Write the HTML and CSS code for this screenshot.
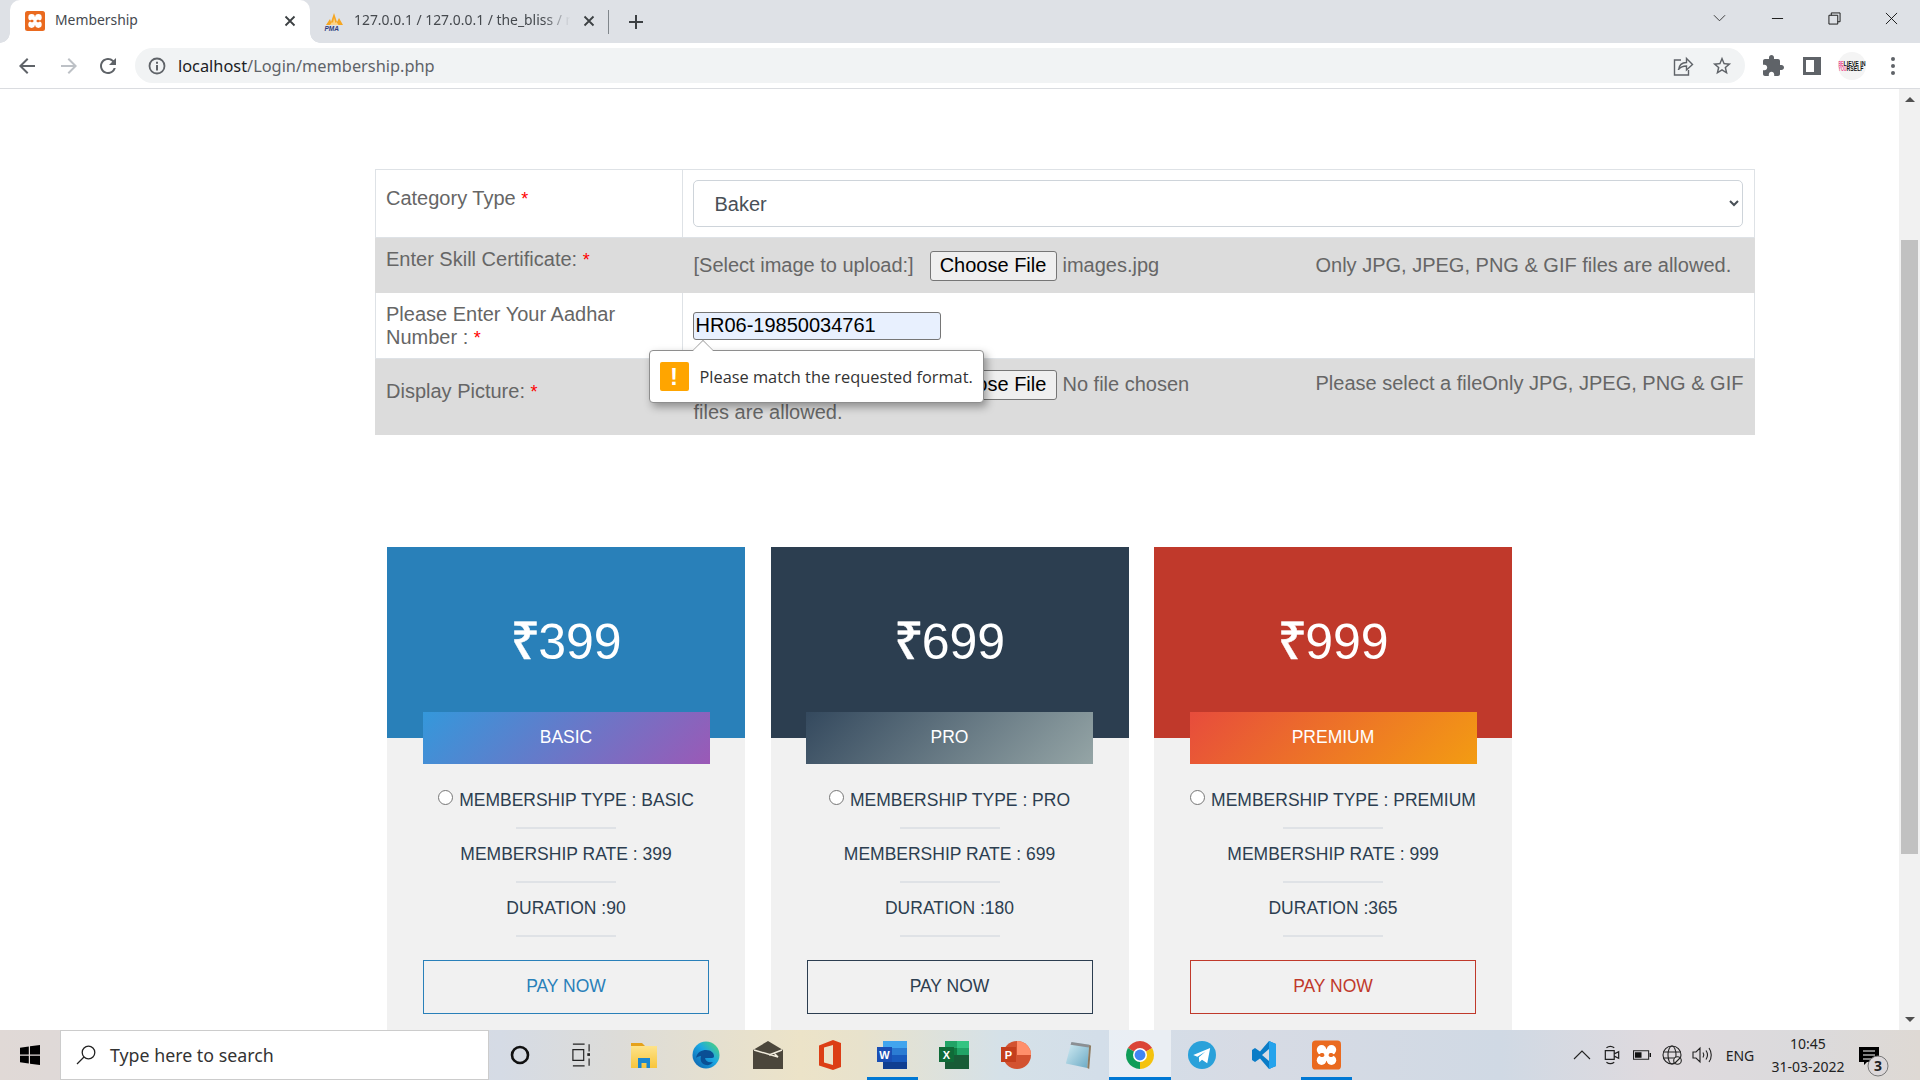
FILE: index.html
```html
<!DOCTYPE html>
<html lang="en">
<head>
<meta charset="utf-8">
<title>Membership</title>
<link rel="stylesheet" href="styles.css">
</head>
<body>
<svg class="defs" width="0" height="0" aria-hidden="true">
  <defs>
    <symbol id="xampp" viewBox="0 0 20 20">
      <rect x="0" y="0" width="20" height="20" rx="2.5" fill="#ea6a1f"/>
      <circle cx="6.600" cy="6.400" r="3.300" fill="#fff"/><circle cx="13.400" cy="6.400" r="3.300" fill="#fff"/>
      <circle cx="6.600" cy="13.600" r="3.300" fill="#fff"/><circle cx="13.400" cy="13.600" r="3.300" fill="#fff"/>
      <rect x="6" y="6" width="8" height="8" fill="#fff"/>
      <rect x="5.300" y="8.700" width="3.200" height="2.600" rx="1.200" fill="#ea6a1f"/><rect x="11.500" y="8.700" width="3.200" height="2.600" rx="1.200" fill="#ea6a1f"/>
    </symbol>
    <linearGradient id="edgeG" x1="0" y1="1" x2="1" y2="0"><stop offset="0" stop-color="#0b5aa8"/><stop offset=".55" stop-color="#1ba7e3"/><stop offset="1" stop-color="#58dc6a"/></linearGradient>
    <linearGradient id="padG" x1="0" y1="0" x2="1" y2="1"><stop offset="0" stop-color="#d5eef5"/><stop offset="1" stop-color="#6aa9c4"/></linearGradient>
    <linearGradient id="folderG" x1="0" y1="0" x2="0" y2="1"><stop offset="0" stop-color="#fde38a"/><stop offset="1" stop-color="#f8c53c"/></linearGradient>
  </defs>
</svg>
<div class="window">
  <header class="tabstrip">
    <div class="tab tab-active">
      <svg class="favicon"><use href="#xampp"/></svg>
      <span class="tab-title">Membership</span>
      <svg class="tab-close" viewBox="0 0 12 12"><path d="M1.5 1.5l9 9M10.5 1.5l-9 9"/></svg>
    </div>
    <div class="tab tab-bg">
      <svg class="favicon" viewBox="0 0 21 21">
        <path d="M2 14L6 8l1 3 3-9 3 9 2-4 4 7z" fill="#f5a623"/>
        <path d="M6 14l2-3 1 1 1-5 1.500 5 1-1 2 3z" fill="#fbd38a"/>
        <text x="0.500" y="20" class="pma">PMA</text>
      </svg>
      <span class="tab-title tab-title-fade">127.0.0.1 / 127.0.0.1 / the_bliss / membership</span>
      <svg class="tab-close" viewBox="0 0 12 12"><path d="M1.5 1.5l9 9M10.5 1.5l-9 9"/></svg>
    </div>
    <span class="tab-sep"></span>
    <svg class="new-tab" viewBox="0 0 16 16"><path d="M8 1v14M1 8h14"/></svg>
    <div class="win-controls">
      <svg class="win-chevron" viewBox="0 0 14 8"><path d="M1 1l6 6 6-6"/></svg>
      <span class="win-btn"><svg viewBox="0 0 14 14"><path d="M1 7h12"/></svg></span>
      <span class="win-btn"><svg viewBox="0 0 14 14"><path d="M1 3.500h9.500V13H1zM3.500 3.500V1H13v9.500h-2.500"/></svg></span>
      <span class="win-btn win-btn-close"><svg viewBox="0 0 14 14"><path d="M1 1l12 12M13 1L1 13"/></svg></span>
    </div>
  </header>

  <nav class="toolbar">
    <span class="tool tool-back"><svg viewBox="0 0 24 24"><path d="M20 11H7.830l5.590-5.590L12 4l-8 8 8 8 1.410-1.410L7.830 13H20v-2z"/></svg></span>
    <span class="tool tool-fwd"><svg viewBox="0 0 24 24"><path d="M4 11h12.170l-5.590-5.590L12 4l8 8-8 8-1.410-1.410L16.170 13H4v-2z"/></svg></span>
    <span class="tool tool-reload"><svg viewBox="0 0 24 24"><path d="M17.650 6.350A7.958 7.958 0 0 0 12 4c-4.420 0-7.990 3.580-7.990 8s3.570 8 7.990 8c3.730 0 6.840-2.550 7.730-6h-2.080A5.990 5.990 0 0 1 12 18c-3.310 0-6-2.690-6-6s2.690-6 6-6c1.660 0 3.140.69 4.220 1.780L13 11h7V4l-2.350 2.350z"/></svg></span>
    <div class="omnibox">
      <svg class="omni-info" viewBox="0 0 20 20"><circle cx="10" cy="10" r="7.500" fill="none" stroke="#5f6368" stroke-width="1.800"/><path d="M9 9h2v5.500H9zM9 5.700h2v2H9z" fill="#5f6368"/></svg>
      <span class="url"><span class="url-host">localhost</span>/Login/membership.php</span>
      <span class="omni-actions">
        <svg class="omni-share" viewBox="0 0 22 22"><path d="M9 5H2.500v15h14v-5M6.500 15c.5-4.500 3.500-7.500 8-7.500V3.500l6 6-6 5.500v-4c-3.500 0-6 1-8 3.500z" fill="none" stroke="#5f6368" stroke-width="1.400"/></svg>
        <svg class="omni-star" viewBox="0 0 24 24"><path d="M22 9.240l-7.190-.62L12 2 9.190 8.630 2 9.240l5.460 4.730L5.820 21 12 17.270 18.180 21l-1.630-7.030L22 9.240zM12 15.400l-3.760 2.270 1-4.280-3.320-2.880 4.380-.38L12 6.100l1.710 4.040 4.380.38-3.320 2.880 1 4.280L12 15.400z"/></svg>
      </span>
    </div>
    <div class="tool-right">
      <span class="tool"><svg viewBox="0 0 24 24"><path d="M20.500 11H19V7c0-1.100-.9-2-2-2h-4V3.500C13 2.120 11.880 1 10.500 1S8 2.120 8 3.500V5H4c-1.100 0-1.990.9-1.990 2v3.800H3.500c1.490 0 2.700 1.210 2.700 2.700s-1.210 2.700-2.700 2.700H2V20c0 1.100.9 2 2 2h3.800v-1.500c0-1.490 1.210-2.700 2.700-2.700 1.490 0 2.700 1.210 2.700 2.700V22H17c1.100 0 2-.9 2-2v-4h1.500c1.380 0 2.500-1.120 2.500-2.500S21.880 11 20.500 11z"/></svg></span>
      <span class="tool"><svg class="side-icon" viewBox="0 0 18 18"><path d="M0 0h18v18H0z" fill="#5f6368"/><path d="M3 3h8v12H3z" fill="#fff"/></svg></span>
      <span class="tool tool-avatar">
        <svg class="avatar" viewBox="0 0 28 28">
          <circle cx="14" cy="14" r="14" fill="#f4f4f4"/>
          <text x="0.500" y="13.500" class="av av-pink" textLength="5" lengthAdjust="spacingAndGlyphs">BE</text><text x="5.500" y="13.500" class="av" textLength="22" lengthAdjust="spacingAndGlyphs">LIEVE IN</text>
          <text x="0.500" y="19" class="av av-pink" textLength="8" lengthAdjust="spacingAndGlyphs">YOU</text><text x="8.500" y="19" class="av" textLength="17" lengthAdjust="spacingAndGlyphs">RSELF</text>
        </svg>
      </span>
      <span class="tool"><svg class="menu-icon" viewBox="0 0 6 18"><circle cx="3" cy="2" r="2"/><circle cx="3" cy="9" r="2"/><circle cx="3" cy="16" r="2"/></svg></span>
    </div>
  </nav>

  <div class="viewport">
    <main class="page">
      <table class="form-table">
        <tr class="row row-category">
          <td class="cell-label"><label class="lbl">Category Type <span class="req">*</span></label></td>
          <td class="cell-field">
            <select class="select"><option>Baker</option></select>
          </td>
        </tr>
        <tr class="row row-shaded row-skill">
          <td class="cell-label"><label class="lbl">Enter Skill Certificate: <span class="req">*</span></label></td>
          <td class="cell-field">
            <span class="upload-note">[Select image to upload:]</span><span class="file-field"><button class="file-btn" type="button">Choose File</button><span class="file-name">images.jpg</span></span><span class="file-help">Only JPG, JPEG, PNG &amp; GIF files are allowed.</span>
          </td>
        </tr>
        <tr class="row row-aadhar">
          <td class="cell-label"><span class="lbl-plain">Please Enter Your Aadhar Number : <span class="req">*</span></span></td>
          <td class="cell-field">
            <span class="input-wrap">
              <input class="text-input" type="text" value="HR06-19850034761">
              <span class="bubble">
                <span class="bubble-arrow"></span>
                <span class="bubble-icon">!</span>
                <span class="bubble-text">Please match the requested format.</span>
              </span>
            </span>
          </td>
        </tr>
        <tr class="row row-shaded row-picture">
          <td class="cell-label"><label class="lbl">Display Picture: <span class="req">*</span></label></td>
          <td class="cell-field">
            <span class="upload-note">[Select image to upload:]</span><span class="file-field"><button class="file-btn" type="button">Choose File</button><span class="file-name">No file chosen</span></span><span class="file-help">Please select a fileOnly JPG, JPEG, PNG &amp; GIF files are allowed.</span>
          </td>
        </tr>
      </table>

      <section class="plans">
        <article class="plan plan-basic">
          <div class="plan-head"><span class="price"><span class="rupee">₹</span>399</span></div>
          <div class="plan-badge">BASIC</div>
          <ul class="plan-list">
            <li><input class="radio" type="radio" name="plan">MEMBERSHIP TYPE : BASIC</li>
            <li>MEMBERSHIP RATE : 399</li>
            <li>DURATION :90</li>
          </ul>
          <a class="pay">PAY NOW</a>
        </article>
        <article class="plan plan-pro">
          <div class="plan-head"><span class="price"><span class="rupee">₹</span>699</span></div>
          <div class="plan-badge">PRO</div>
          <ul class="plan-list">
            <li><input class="radio" type="radio" name="plan">MEMBERSHIP TYPE : PRO</li>
            <li>MEMBERSHIP RATE : 699</li>
            <li>DURATION :180</li>
          </ul>
          <a class="pay">PAY NOW</a>
        </article>
        <article class="plan plan-premium">
          <div class="plan-head"><span class="price"><span class="rupee">₹</span>999</span></div>
          <div class="plan-badge">PREMIUM</div>
          <ul class="plan-list">
            <li><input class="radio" type="radio" name="plan">MEMBERSHIP TYPE : PREMIUM</li>
            <li>MEMBERSHIP RATE : 999</li>
            <li>DURATION :365</li>
          </ul>
          <a class="pay">PAY NOW</a>
        </article>
      </section>
    </main>
    <aside class="scrollbar">
      <span class="sb-btn"><span class="sb-up"></span></span>
      <div class="sb-track"><span class="sb-thumb"></span></div>
      <span class="sb-btn"><span class="sb-down"></span></span>
    </aside>
  </div>

  <footer class="taskbar">
    <span class="start"><svg viewBox="0 0 20 20"><path d="M0 2.800L8.800 1.500V9.500H0zM10 1.300L20 0V9.500H10zM0 10.700H8.800V18.600L0 17.300zM10 10.700H20V20L10 18.700z"/></svg></span>
    <div class="search">
      <svg class="search-icon" viewBox="0 0 20 20"><circle cx="12.500" cy="7.500" r="6.300"/><path d="M8 12L1 19"/></svg>
      <span class="search-text">Type here to search</span>
    </div>
    <div class="apps">
      <span class="app"><svg class="ic" viewBox="0 0 20 20"><circle cx="10" cy="10" r="8" fill="none" stroke="#111" stroke-width="2.600"/></svg></span>
      <span class="app"><svg class="ic ic-view" viewBox="0 0 20 26"><path d="M1 1h13M1 25h13M1 7h12v12H1zM19 1v8M19 17v8" fill="none" stroke="#222" stroke-width="1.300"/><rect x="17" y="11" width="3" height="3" fill="#222"/></svg></span>
      <span class="app"><svg class="ic ic-folder" viewBox="0 0 28 28"><path d="M1 2h11l3 3H1z" fill="#e5a11b"/><path d="M1 5h26v22H1z" fill="url(#folderG)"/><path d="M8 27V17h12v10h-3.500v-5h-5v5z" fill="#1b87cf"/></svg></span>
      <span class="app"><svg class="ic ic-edge" viewBox="0 0 28 28"><circle cx="14" cy="14" r="13.500" fill="url(#edgeG)"/><path d="M4 17c1-6 6-8 10-8 5 0 8 3 8 6 0 1-.5 2-2 2h-7c.5 3 3 5 8 4-2.500 3-5 3.500-7 3-5-1-6-5-5-9-2 0-4 1-5 2z" fill="#0a4f95"/></svg></span>
      <span class="app"><svg class="ic ic-mail" viewBox="0 0 30 28"><path d="M0 9L15 0l15 9v19H0z" fill="#4b463b"/><path d="M1 9l24 7-4-4 8-3-13 5" fill="none" stroke="#f1ecdd" stroke-width="1.400"/></svg></span>
      <span class="app"><svg class="ic ic-office" viewBox="0 0 24 30"><path fill-rule="evenodd" d="M1 5.500L15 0l8 3v24l-8 3-14-4.500zM6 7.500v15l9 2.500V5z" fill="#dc3e15"/></svg></span>
      <span class="app app-open">
        <svg class="ic ic-doc" viewBox="0 0 30 28">
          <rect x="6" y="0" width="24" height="7" fill="#41a5ee"/><rect x="6" y="7" width="24" height="7" fill="#2b7cd3"/><rect x="6" y="14" width="24" height="7" fill="#185abd"/><rect x="6" y="21" width="24" height="7" fill="#103f91"/>
          <rect x="0" y="6" width="15" height="15" fill="#1a4fb4"/><text x="7.500" y="18" class="doc-letter">W</text>
        </svg>
      </span>
      <span class="app">
        <svg class="ic ic-doc" viewBox="0 0 30 28">
          <rect x="6" y="0" width="12" height="7" fill="#21a366"/><rect x="18" y="0" width="12" height="7" fill="#33c481"/><rect x="6" y="7" width="12" height="7" fill="#107c41"/><rect x="18" y="7" width="12" height="7" fill="#21a366"/><rect x="6" y="14" width="24" height="14" fill="#185c37"/>
          <rect x="0" y="6" width="15" height="15" fill="#0f6b38"/><text x="7.500" y="18" class="doc-letter">X</text>
        </svg>
      </span>
      <span class="app">
        <svg class="ic ic-doc" viewBox="0 0 30 28">
          <circle cx="16" cy="14" r="14" fill="#d35230"/><path d="M16 0a14 14 0 0 1 14 14H16z" fill="#ff8f6b"/>
          <rect x="0" y="6" width="15" height="15" fill="#c43e1c"/><text x="7.500" y="18" class="doc-letter">P</text>
        </svg>
      </span>
      <span class="app"><svg class="ic ic-pad" viewBox="0 0 28 30"><path d="M7 1l19 3-2 25L1 24z" fill="url(#padG)"/><path d="M7 1l19 3-.4 3L6 4z" fill="#8b8f93"/><path d="M26 4l2 1-2 25-2-1z" fill="#8d7a5f"/></svg></span>
      <span class="app app-active">
        <svg class="ic ic-round" viewBox="2 2 20 20">
          <path d="M12 12L3.340 7A10 10 0 0 1 20.660 7z" fill="#db4437"/>
          <path d="M12 12L20.660 7A10 10 0 0 1 12 22z" fill="#f4c20d"/>
          <path d="M12 12L12 22A10 10 0 0 1 3.340 7z" fill="#0f9d58"/>
          <circle cx="12" cy="12" r="5" fill="#fff"/><circle cx="12" cy="12" r="3.900" fill="#4285f4"/>
        </svg>
      </span>
      <span class="app"><svg class="ic ic-round" viewBox="0 0 24 24"><circle cx="12" cy="12" r="12" fill="#2aa1da"/><path d="M4.500 12L19 6l-2.500 13-4.500-3-2.300 2.300L9.300 14 15 9l-7 4.500z" fill="#fff"/></svg></span>
      <span class="app"><svg class="ic ic-round" viewBox="0 0 24 28"><path d="M17 0L8 10.500 3 7l-3 2v10l3 2 5-3.500L17 28l7-3V3zM17 8v12l-7-6z" fill="#0a7cc7" fill-rule="evenodd"/><path d="M17 0l7 3v22l-7 3z" fill="#25a3ec"/></svg></span>
      <span class="app app-open"><svg class="ic ic-xampp"><use href="#xampp"/></svg></span>
    </div>
    <div class="tray">
      <span class="tray-ic"><svg viewBox="0 0 18 10"><path d="M1 9l8-8 8 8"/></svg></span>
      <span class="tray-ic"><svg viewBox="0 0 16 18"><path d="M2 5h8v8H2zM10 8l4-2v6l-4-2M3 2.500c2-1.500 5-1.500 7 0M3 15.500c2 1.500 5 1.500 7 0"/></svg></span>
      <span class="tray-ic"><svg viewBox="0 0 19 10"><path d="M.5.5h16v9H.5z"/><path class="solid" d="M2 2h7v6H2zM17.500 3H19v4h-1.500z"/></svg></span>
      <span class="tray-ic tray-wide"><svg viewBox="0 0 20 20"><circle cx="10" cy="10" r="9"/><ellipse cx="10" cy="10" rx="4" ry="9"/><path d="M1 7h18M1 13h18"/><circle class="white" cx="15.500" cy="15.500" r="3.800"/><path d="M13 18l5-5"/></svg></span>
      <span class="tray-ic tray-wide"><svg viewBox="0 0 20 18"><path d="M1 6h3l4-4v14l-4-4H1zM11 6.500c1 1.500 1 3.500 0 5M14 4.500c2 3 2 6 0 9M17 2c3 4 3 10 0 14"/></svg></span>
      <span class="lang">ENG</span>
      <span class="clock"><span>10:45</span><span>31-03-2022</span></span>
      <span class="notif">
        <svg class="notif-icon" viewBox="0 0 32 31"><path d="M0 0h20v15H8l-3 3v-3H0z" fill="#000"/><path d="M4 4h12M4 8h12M4 12h8" stroke="#fff" stroke-width="1.200"/><circle cx="19" cy="19" r="10" fill="#dcd8da" stroke="#777" stroke-width="1"/><text x="19" y="24" class="notif-num">3</text></svg>
      </span>
    </div>
  </footer>
</div>
</body>
</html>
```

FILE: styles.css
```css
* { box-sizing: border-box; }
html, body { margin: 0; height: 100%; overflow: hidden; }
body { font-family: "Liberation Sans", Arial, sans-serif; background: #fff; color: #666; }
.defs { display: block; height: 0; width: 0; }
.window { display: flex; flex-direction: column; height: 100vh; }

/* tab strip */
.tabstrip { display: flex; align-items: center; height: 43px; flex: none; background: #dee1e6; padding-left: 10px; }
.tab { display: flex; align-items: center; height: 43px; padding-bottom: 1px; font-family: "Noto Sans", sans-serif; font-size: 14px; }
.tab-active { width: 300px; background: #fff; border-radius: 10px 10px 0 0; padding: 0 14px 1px 15px; position: relative; }
.tab-active::before, .tab-active::after { content: ""; position: absolute; bottom: 0; width: 10px; height: 10px; }
.tab-active::before { left: -10px; background: radial-gradient(circle at 0 0, #dee1e6 9.500px, #fff 10px); }
.tab-active::after { right: -10px; background: radial-gradient(circle at 100% 0, #dee1e6 9.500px, #fff 10px); }
.tab-bg { width: 298px; padding: 0 13px 1px 14px; }
.favicon { width: 20px; height: 20px; flex: none; }
.tab-bg .favicon { width: 21px; height: 21px; }
.tab-title { flex: 1; margin-left: 10px; color: #45494e; white-space: nowrap; overflow: hidden; line-height: 20px; padding-bottom: 2px; }
.tab-active .tab-title { font-size: 13.900px; }
.tab-title-fade { margin-left: 9px; font-size: 13.900px; -webkit-mask-image: linear-gradient(to right, #000 85%, transparent 97%); mask-image: linear-gradient(to right, #000 85%, transparent 97%); }
.tab-close { width: 12px; height: 12px; flex: none; margin-left: 6px; fill: none; stroke: #3c4043; stroke-width: 1.800; }
.tab-sep { width: 1px; height: 24px; background: #80868b; flex: none; }
.new-tab { width: 16px; height: 16px; margin-left: 19px; fill: none; stroke: #3c4043; stroke-width: 2; flex: none; }
.pma { font: italic bold 6.500px "Liberation Sans", sans-serif; fill: #2f3c7e; }
.win-controls { display: flex; align-items: center; margin-left: auto; height: 43px; padding-bottom: 7px; }
.win-chevron { width: 13px; height: 8px; margin-right: 23.500px; fill: none; stroke: #333; stroke-width: 1; }
.win-btn { width: 57px; display: flex; justify-content: center; }
.win-btn svg { width: 13px; height: 13px; fill: none; stroke: #111; stroke-width: 1; }

/* toolbar */
.toolbar { display: flex; align-items: center; height: 46px; flex: none; background: #fff; border-bottom: 1px solid #dadce0; padding-left: 7px; }
.tool { display: flex; align-items: center; justify-content: center; width: 40px; height: 36px; flex: none; }
.tool svg { width: 24px; height: 24px; fill: #5f6368; }
.tool-fwd { margin-left: 2px; }
.tool-fwd svg { fill: #bdc1c6; }
.tool-reload { margin-left: -1px; }
.omnibox { display: flex; align-items: center; flex: 1; height: 35px; margin-left: 7px; background: #f1f3f4; border-radius: 18px; padding: 0 12px 0 12px; }
.omni-info { width: 20px; height: 20px; flex: none; }
.url { margin-left: 11px; font-family: "Noto Sans", sans-serif; font-size: 16.350px; color: #5f6368; white-space: nowrap; }
.url-host { color: #202124; }
.omni-actions { display: flex; align-items: center; margin-left: auto; }
.omni-share { width: 22px; height: 22px; margin-right: 17px; }
.omni-star { width: 22px; height: 22px; fill: #5f6368; }
.tool-right { display: flex; align-items: center; margin-left: 8px; padding-right: 8px; }
.tool-right .tool { width: 39px; }
.tool-right .side-icon { width: 18px; height: 18px; }
.tool-avatar { margin: 0 1.500px; }
.tool .avatar { width: 28px; height: 28px; }
.tool .menu-icon { width: 6px; height: 18px; }
.av { font: bold 7.500px "Liberation Sans", sans-serif; fill: #111; }
.av-pink { fill: #ec4d8f; }

/* viewport */
.viewport { display: flex; flex: 1; min-height: 0; }
.page { flex: 1; min-width: 0; overflow: hidden; padding: 80px 0 0 375px; }
.scrollbar { display: flex; flex-direction: column; width: 21px; flex: none; background: #f1f1f1; }
.sb-btn { display: flex; align-items: center; justify-content: center; height: 21px; flex: none; }
.sb-up, .sb-down { width: 0; height: 0; border-left: 5px solid transparent; border-right: 5px solid transparent; }
.sb-up { border-bottom: 5px solid #505050; }
.sb-down { border-top: 5px solid #505050; }
.sb-track { flex: 1; padding: 130px 2px 0; }
.sb-thumb { display: block; height: 614px; background: #c1c1c1; }

/* form table */
.form-table { width: 1380px; border-collapse: collapse; table-layout: fixed; font-size: 20px; }
.cell-label { width: 306.500px; padding: 0 10px; vertical-align: middle; border: 1px solid #dee2e6; }
.cell-field { padding: 0 10px 0 11px; vertical-align: middle; border: 1px solid #dee2e6; line-height: 27px; }
.row-category td { height: 68px; }
.row-skill td { height: 55px; }
.row-aadhar td { height: 66px; }
.row-picture td { height: 76px; }
.row-picture .cell-field { padding-top: 3px; }
.row-shaded td { background: #dcdcdc; border-color: #dcdcdc; }
.lbl { display: inline-block; line-height: 23px; margin-bottom: 10px; }
.lbl-plain { display: block; line-height: 23px; padding-top: 1px; }
.req { color: #f00; font-size: 18px; }
.select { display: block; width: 100%; height: 47px; margin-left: -1px; border: 1px solid #ced4da; border-radius: 5px; background: #fff; color: #495057; font: 20px "Liberation Sans", sans-serif; padding: 0 17px; }
.upload-note { display: inline-block; width: 236px; vertical-align: middle; }
.file-field { display: inline-block; width: 386px; vertical-align: middle; }
.file-btn { width: 127px; height: 30px; padding: 0; margin: -2px 6px -2px 0; border: 1px solid #767676; border-radius: 3px; background: #efefef; color: #000; font: 20px "Liberation Sans", sans-serif; vertical-align: middle; }
.file-name { vertical-align: middle; }
.file-help { vertical-align: middle; }

.input-wrap { display: inline-block; position: relative; vertical-align: middle; line-height: 0; margin-left: -1px; }
.text-input { display: block; width: 248px; height: 28px; padding: 1px 2px; border: 1px solid #767676; border-radius: 3px; background: #e8f0fe; color: #000; font: 20px "Liberation Sans", sans-serif; }
.bubble { position: absolute; left: -44px; top: 38.500px; z-index: 5; display: flex; align-items: center; width: 335px; height: 53px; padding-left: 10px; background: #fff; border: 1px solid #8e8e8e; border-radius: 4px; box-shadow: 3px 4px 8px rgba(0, 0, 0, .35); }
.bubble-arrow { position: absolute; left: 44px; top: -10px; width: 18px; height: 18px; background: #fff; border-left: 1px solid #aaa; border-top: 1px solid #aaa; transform: rotate(45deg) scale(.8); }
.bubble-icon { display: flex; align-items: center; justify-content: center; width: 29px; height: 29px; flex: none; border-radius: 2px; background: #ffa500; color: #fff; font: bold 24px/29px "Liberation Sans", sans-serif; position: relative; }
.bubble-text { margin-left: 11px; font: 16.350px/20px "Open Sans", sans-serif; color: #333; white-space: nowrap; }

/* plans */
.plans { display: flex; gap: 25.500px; margin: 112px 0 0 12px; }
.plan { width: 358px; flex: none; background: #f1f1f1; height: 520px; text-align: center; }
.plan-head { display: flex; align-items: center; justify-content: center; height: 191px; color: #fff; }
.price { font-size: 50px; line-height: 58px; margin-top: -5px; }
.rupee { font-family: "Noto Sans", "Liberation Sans", sans-serif; font-weight: 500; font-size: 52px; letter-spacing: -2px; -webkit-text-stroke: .4px #fff; }
.plan-badge { width: 287px; height: 52px; margin: -26px auto 0; color: #fff; font-size: 17.500px; line-height: 50px; position: relative; }
.plan-list { list-style: none; margin: 26px 0 0; padding: 0; color: #2c3e50; font-size: 17.500px; line-height: 20px; }
.plan-list li { padding-bottom: 34px; position: relative; }
.plan-list li::after { content: ""; position: absolute; left: 50%; bottom: 15px; width: 100px; height: 2px; margin-left: -50px; background: #dfe2e6; }
.radio { -webkit-appearance: none; appearance: none; display: inline-block; width: 15px; height: 15px; margin: 0 6px 0 0; border: 1px solid #767676; border-radius: 50%; background: #fff; vertical-align: 1px; }
.pay { display: block; width: 286px; height: 54px; margin: 8px auto 0; background: transparent; border: 1px solid; font-size: 17.500px; line-height: 50px; }
.plan-basic .plan-head { background: #2980b9; }
.plan-basic .plan-badge { background: linear-gradient(135deg, #3498db, #9b59b6); }
.plan-basic .pay { color: #2980b9; }
.plan-pro .plan-head { background: #2c3e50; }
.plan-pro .plan-badge { background: linear-gradient(135deg, #34495e, #95a5a6); }
.plan-pro .pay { color: #2c3e50; }
.plan-premium .plan-head { background: #c0392b; }
.plan-premium .plan-badge { background: linear-gradient(135deg, #e74c3c, #f39c12); }
.plan-premium .pay { color: #c0392b; }

/* taskbar */
.taskbar { display: flex; align-items: stretch; height: 50px; flex: none; background: linear-gradient(to right, #e0d9d6 0, #dcd9da 200px, #d5dbe5 500px, #dddcd8 620px, #ece3c8 800px, #e8e2cc 860px, #d5e1e8 1000px, #d3dee9 1100px, #d7dbe4 1250px, #d0d9e4 1500px, #dfdade 1660px, #dbdadc 1800px, #ded9d4 1920px); }
.start { display: flex; align-items: center; justify-content: center; width: 60px; flex: none; }
.start svg { width: 20px; height: 20px; fill: #000; }
.search { display: flex; align-items: center; width: 429px; flex: none; background: #fff; border: 1px solid #ccc; padding-left: 15px; }
.search-icon { width: 20px; height: 20px; fill: none; stroke: #222; stroke-width: 1.300; flex: none; }
.search-text { margin-left: 14px; font: 17.800px "Noto Sans", sans-serif; color: #333; white-space: nowrap; }
.apps { display: flex; flex: none; }
.app { display: flex; align-items: center; justify-content: center; width: 62px; flex: none; }
.ic { width: 20px; height: 20px; }
.ic-view { width: 18px; height: 24px; margin-right: 2px; }
.ic-folder, .ic-edge, .ic-pad { width: 28px; height: 28px; }
.ic-mail { width: 30px; height: 28px; }
.ic-office { width: 24px; height: 30px; }
.ic-doc { width: 30px; height: 28px; }
.ic-round { width: 28px; height: 28px; }
.ic-xampp { width: 29px; height: 30px; }
.doc-letter { font: bold 11px "Liberation Sans", sans-serif; fill: #fff; text-anchor: middle; }
.app-open { background: linear-gradient(#0078d4, #0078d4) bottom center / 51px 3px no-repeat; }
.app-active { background: linear-gradient(#0078d4, #0078d4) bottom center / 100% 3px no-repeat, rgba(255, 255, 255, .5); }
.tray { display: flex; align-items: center; margin-left: auto; width: 353px; flex: none; }
.tray-ic { display: flex; align-items: center; justify-content: center; width: 30px; flex: none; }
.tray-ic svg { width: 18px; height: 20px; fill: none; stroke: #222; stroke-width: 1.100; }
.tray-wide svg { width: 20px; }
.tray-ic .solid { fill: #111; stroke: none; }
.tray-ic .white { fill: #e4e0e0; }
.lang { width: 30px; margin-left: 8px; font: 14px "Noto Sans", sans-serif; color: #222; text-align: center; flex: none; }
.clock { display: flex; flex-direction: column; align-items: center; width: 80px; margin-left: 13px; font: 14px/23px "Noto Sans", sans-serif; color: #222; flex: none; }
.notif { width: 50px; margin-left: 11px; flex: none; display: flex; align-items: center; padding-top: 14px; }
.notif-icon { width: 32px; height: 31px; }
.notif-num { font: bold 14px "Noto Sans", sans-serif; fill: #222; text-anchor: middle; }
```
